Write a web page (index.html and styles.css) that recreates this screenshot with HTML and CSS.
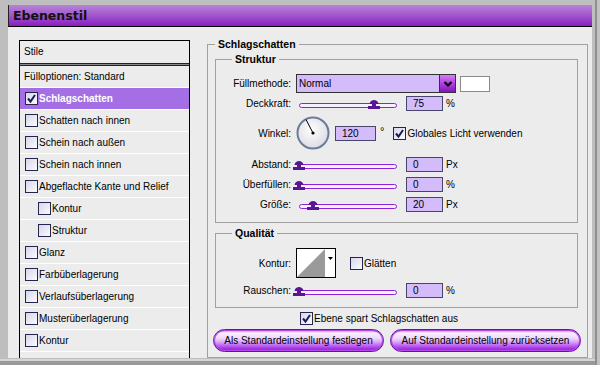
FILE: index.html
```html
<!DOCTYPE html>
<html lang="de">
<head>
  <meta charset="UTF-8">
  <title>Ebenenstil</title>
  <link rel="stylesheet" href="styles.css">
</head>
<body>
  <div class="window">
    <div class="titlebar">Ebenenstil</div>

    <div class="dialog">
      <aside class="styles-list">
        <div class="list-head">Stile</div>
        <div class="list-sep"></div>
        <ul class="list">
          <li class="item plain">Fülloptionen: Standard</li>
          <li class="item active"><span class="cb on"><svg viewBox="0 0 13 13"><path d="M3 6.5 L5.5 9.5 L10 3"/></svg></span>Schlagschatten</li>
          <li class="item"><span class="cb"></span>Schatten nach innen</li>
          <li class="item"><span class="cb"></span>Schein nach außen</li>
          <li class="item"><span class="cb"></span>Schein nach innen</li>
          <li class="item"><span class="cb"></span>Abgeflachte Kante und Relief</li>
          <li class="item sub"><span class="cb"></span>Kontur</li>
          <li class="item sub"><span class="cb"></span>Struktur</li>
          <li class="item"><span class="cb"></span>Glanz</li>
          <li class="item"><span class="cb"></span>Farbüberlagerung</li>
          <li class="item"><span class="cb"></span>Verlaufsüberlagerung</li>
          <li class="item"><span class="cb"></span>Musterüberlagerung</li>
          <li class="item"><span class="cb"></span>Kontur</li>
        </ul>
      </aside>

      <div class="settings">
        <fieldset class="group outer">
          <legend>Schlagschatten</legend>

          <fieldset class="group inner struktur">
            <legend>Struktur</legend>

            <div class="row r-mode">
              <span class="label">Füllmethode:</span>
              <div class="select">
                <span class="select-value">Normal</span>
                <span class="select-btn"><svg viewBox="0 0 10 8"><path d="M1.5 2 L5 5.5 L8.5 2"/></svg></span>
              </div>
              <span class="swatch"></span>
            </div>

            <div class="row r-opacity">
              <span class="label">Deckkraft:</span>
              <div class="slider">
                <div class="track"></div>
                <svg class="thumb" style="left: 72px" viewBox="0 0 12 10"><path d="M1.5 5 C2 2 4 1 6 1 C8 1 10 2 10.5 5 Z"/><rect x="4" y="4" width="4" height="4"/><rect x="0" y="7" width="12" height="3"/></svg>
              </div>
              <input class="num" type="text" value="75">
              <span class="unit">%</span>
            </div>

            <div class="row r-angle">
              <span class="label">Winkel:</span>
              <svg class="dial" viewBox="0 0 34 34">
                <defs>
                  <radialGradient id="dialfill" cx="0.45" cy="0.4" r="0.6">
                    <stop offset="0" stop-color="#ffffff"/>
                    <stop offset="1" stop-color="#dcdce4"/>
                  </radialGradient>
                </defs>
                <circle cx="17" cy="17" r="15.5" fill="url(#dialfill)" stroke="#6b7b9b" stroke-width="2"/>
                <line x1="17" y1="17" x2="10" y2="3.5" stroke="#000" stroke-width="1"/>
                <circle cx="17" cy="17" r="1.6" fill="#000"/>
              </svg>
              <input class="num wide" type="text" value="120">
              <span class="unit deg">°</span>
              <label class="check global"><span class="cb on"><svg viewBox="0 0 13 13"><path d="M3 6.5 L5.5 9.5 L10 3"/></svg></span>Globales Licht verwenden</label>
            </div>

            <div class="row r-distance">
              <span class="label">Abstand:</span>
              <div class="slider">
                <div class="track"></div>
                <svg class="thumb" style="left: -3px" viewBox="0 0 12 10"><path d="M1.5 5 C2 2 4 1 6 1 C8 1 10 2 10.5 5 Z"/><rect x="4" y="4" width="4" height="4"/><rect x="0" y="7" width="12" height="3"/></svg>
              </div>
              <input class="num" type="text" value="0">
              <span class="unit">Px</span>
            </div>

            <div class="row r-spread">
              <span class="label">Überfüllen:</span>
              <div class="slider">
                <div class="track"></div>
                <svg class="thumb" style="left: -3px" viewBox="0 0 12 10"><path d="M1.5 5 C2 2 4 1 6 1 C8 1 10 2 10.5 5 Z"/><rect x="4" y="4" width="4" height="4"/><rect x="0" y="7" width="12" height="3"/></svg>
              </div>
              <input class="num" type="text" value="0">
              <span class="unit">%</span>
            </div>

            <div class="row r-size">
              <span class="label">Größe:</span>
              <div class="slider">
                <div class="track"></div>
                <svg class="thumb" style="left: 11px" viewBox="0 0 12 10"><path d="M1.5 5 C2 2 4 1 6 1 C8 1 10 2 10.5 5 Z"/><rect x="4" y="4" width="4" height="4"/><rect x="0" y="7" width="12" height="3"/></svg>
              </div>
              <input class="num" type="text" value="20">
              <span class="unit">Px</span>
            </div>
          </fieldset>

          <fieldset class="group inner quality">
            <legend>Qualität</legend>

            <div class="row r-contour">
              <span class="label">Kontur:</span>
              <svg class="contour" viewBox="0 0 40 30">
                <rect x="0.5" y="0.5" width="39" height="29" fill="#fff" stroke="#000"/>
                <polygon points="1,29 29,1 29,29" fill="#9a9a9a"/>
                <polygon points="32,9 37,9 34.5,12" fill="#000"/>
              </svg>
              <label class="check smooth"><span class="cb"></span>Glätten</label>
            </div>

            <div class="row r-noise">
              <span class="label">Rauschen:</span>
              <div class="slider">
                <div class="track"></div>
                <svg class="thumb" style="left: -3px" viewBox="0 0 12 10"><path d="M1.5 5 C2 2 4 1 6 1 C8 1 10 2 10.5 5 Z"/><rect x="4" y="4" width="4" height="4"/><rect x="0" y="7" width="12" height="3"/></svg>
              </div>
              <input class="num" type="text" value="0">
              <span class="unit">%</span>
            </div>
          </fieldset>

          <label class="check knockout"><span class="cb on"><svg viewBox="0 0 13 13"><path d="M3 6.5 L5.5 9.5 L10 3"/></svg></span>Ebene spart Schlagschatten aus</label>

          <div class="buttons">
            <button class="btn btn-set">Als Standardeinstellung festlegen</button>
            <button class="btn btn-reset">Auf Standardeinstellung zurücksetzen</button>
          </div>
        </fieldset>
      </div>
    </div>
  </div>
</body>
</html>
```

FILE: styles.css
```css
body {
  margin: 0;
  font-family: "Liberation Sans", Arial, sans-serif;
  font-size: 10px;
  color: #000;
  overflow: hidden;
}

.window {
  width: 600px;
  height: 365px;
  box-sizing: border-box;
  padding: 5px 8px 7px 8px;
  background: #bebebe;
  display: flex;
  flex-direction: column;
  box-shadow: inset -3px 0 0 #c2c2c2, inset -5px 0 0 #8e8e8e, inset 0 -4px 0 #9a9a9a, inset 0 -6px 0 #d6d6d6;
}

.titlebar {
  height: 21px;
  line-height: 21px;
  padding-left: 4px;
  border-left: 1px solid #222;
  border-bottom: 1px solid #000;
  background: linear-gradient(#b784d8, #a056cc 50%, #8a1cc2);
  font-family: "DejaVu Sans", sans-serif;
  font-size: 12.5px;
  font-weight: bold;
  color: #111;
}

.dialog {
  flex: 1;
  min-height: 0;
  display: flex;
  gap: 17px;
  padding: 11px 4px 0 11px;
  background: #ececec;
}

/* left list */
.styles-list {
  width: 171px;
  flex: none;
  box-sizing: border-box;
  margin-top: 2px;
  border: 1px solid #000;
  border-bottom: 0;
}

.list-head {
  height: 22px;
  line-height: 22px;
  padding-left: 4px;
}

.list-sep {
  height: 1px;
  background: #8a8a8a;
  border-top: 1px solid #222;
  border-bottom: 1px solid #222;
}

.list {
  list-style: none;
  margin: 0;
  padding: 0;
}

.item {
  height: 21px;
  border-bottom: 1px solid #fff;
  display: flex;
  align-items: center;
  gap: 1px;
  padding-left: 5px;
  white-space: nowrap;
}

.item.plain {
  padding-left: 4px;
}

.item.sub {
  padding-left: 18px;
}

.item.active {
  background: #a46fe5;
  color: #fff;
  font-weight: bold;
}

.cb {
  width: 13px;
  height: 13px;
  flex: none;
  box-sizing: border-box;
  border: 1px solid #24244c;
  background: linear-gradient(135deg, #d6d6ea, #fbfbff);
}

.cb svg {
  display: block;
  width: 11px;
  height: 11px;
  fill: none;
  stroke: #1c1c58;
  stroke-width: 2;
}

.cb.on svg {
  margin: -1px 0 0 -1px;
  width: 13px;
  height: 13px;
}

/* right side */
.settings {
  flex: 1;
  display: flex;
  flex-direction: column;
}

.group {
  margin: 0;
  min-width: 0;
  border: 1px solid #a0a0a0;
}

.group legend {
  font-weight: bold;
  line-height: 12px;
  padding: 0 3px;
  margin-left: 7px;
}

.outer {
  flex: 1;
  padding: 3px 9px 0 7px;
}

.outer > legend {
  margin-left: 0;
  font-size: 10.5px;
}

.inner {
  padding: 9px 0 10px 0;
}

.inner > legend {
  margin-left: 16px;
  font-size: 10.5px;
}

.quality {
  margin-top: 4px;
  padding-bottom: 9px;
}

.row {
  display: flex;
  align-items: center;
}

.label {
  width: 75px;
  flex: none;
  text-align: right;
  margin-right: 5px;
}

.r-mode { height: 19px; }
.r-opacity { margin-top: 3px; }
.r-angle { margin-top: 5px; height: 34px; }
.r-distance { margin-top: 7px; }
.r-spread, .r-size { margin-top: 5px; }
.r-contour { height: 30px; }
.r-noise { margin-top: 5px; }

.select {
  display: flex;
  width: 160px;
  height: 19px;
  box-sizing: border-box;
  border: 1px solid #333;
}

.select-value {
  flex: 1;
  background: #d4bbfa;
  padding-left: 2px;
  line-height: 17px;
}

.select-btn {
  width: 15px;
  border-left: 1px solid #333;
  background: linear-gradient(#d77cf4, #b040e0 50%, #8412c0);
  display: flex;
  align-items: center;
  justify-content: center;
}

.select-btn svg {
  width: 10px;
  height: 8px;
  fill: none;
  stroke: #000;
  stroke-width: 2.2;
}

.swatch {
  width: 30px;
  height: 16px;
  box-sizing: border-box;
  margin-left: 4px;
  border: 1px solid #8a8a8a;
  background: #fff;
}

.slider {
  position: relative;
  width: 110px;
  height: 15px;
  flex: none;
  box-sizing: border-box;
  padding: 7px 9px 0 3px;
}

.track {
  height: 5px;
  box-sizing: border-box;
  border: 1px solid #8d22da;
  border-radius: 3px;
  background: #f8f0ff;
}

.thumb {
  position: absolute;
  top: 3px;
  width: 12px;
  height: 10px;
  fill: #5a1496;
}

.num {
  width: 37px;
  height: 15px;
  box-sizing: border-box;
  margin: 0;
  padding: 0 0 0 6px;
  border: 1px solid #46466c;
  background: #d4bbfa;
  font: inherit;
  color: #000;
  outline: none;
}

.num.wide {
  width: 41px;
  margin-left: 5px;
}

.unit {
  margin-left: 3px;
}

.unit.deg {
  margin-left: 4px;
  align-self: flex-start;
  margin-top: 9px;
  font-size: 11px;
}

.dial {
  width: 34px;
  height: 34px;
  flex: none;
}

.check {
  display: flex;
  align-items: center;
  gap: 1px;
  white-space: nowrap;
}

.global {
  margin-left: 9px;
}

.contour {
  width: 40px;
  height: 30px;
  flex: none;
}

.smooth {
  margin-left: 14px;
}

.knockout {
  margin-top: 4px;
  padding-left: 85px;
}

.buttons {
  display: flex;
  gap: 6px;
  margin: 4px -3px 0 -2px;
}

.btn {
  height: 23px;
  padding: 0;
  border: 1px solid #6a0ea8;
  border-radius: 12px;
  font: inherit;
  color: #000;
  cursor: pointer;
  background: linear-gradient(#c070ee 0%, #fbefff 14%, #eed6fd 40%, #dba8f8 56%, #b44eec 80%, #9a26dc 92%, #c47ef0 100%);
  box-shadow: inset 0 0 0 1px #b248ea;
}

.btn-set {
  width: 171px;
}

.btn-reset {
  width: 191px;
}
```
